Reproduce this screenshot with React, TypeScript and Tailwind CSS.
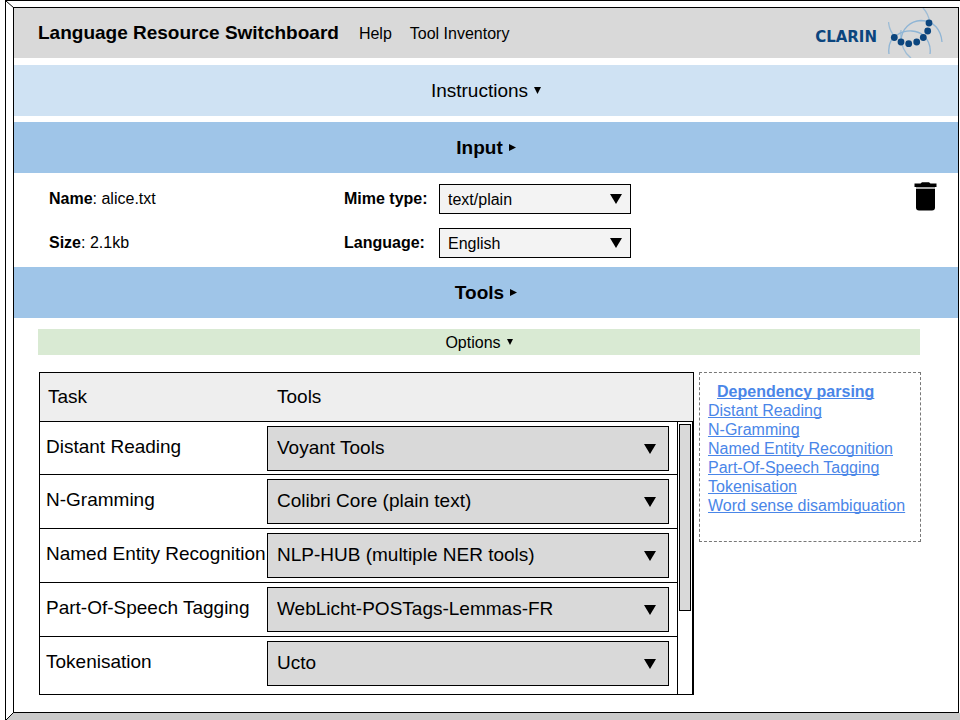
import React from "react";

type ToolRow = { task: string; tool: string; height: string };

const rows: ToolRow[] = [
  { task: "Distant Reading", tool: "Voyant Tools", height: "h-[53px]" },
  { task: "N-Gramming", tool: "Colibri Core (plain text)", height: "h-[54px]" },
  { task: "Named Entity Recognition", tool: "NLP-HUB (multiple NER tools)", height: "h-[54px]" },
  { task: "Part-Of-Speech Tagging", tool: "WebLicht-POSTags-Lemmas-FR", height: "h-[54px]" },
  { task: "Tokenisation", tool: "Ucto", height: "h-[57px]" },
];

const taskLinks = [
  "Distant Reading",
  "N-Gramming",
  "Named Entity Recognition",
  "Part-Of-Speech Tagging",
  "Tokenisation",
  "Word sense disambiguation",
];

function Triangle({ down, className }: { down?: boolean; className: string }) {
  return (
    <svg viewBox="0 0 12 10" preserveAspectRatio="none" aria-hidden="true" className={className}>
      <path d={down ? "M0 0H12L6 10Z" : "M0 0L12 5L0 10Z"} fill="#000" />
    </svg>
  );
}

function Dropdown({
  id,
  value,
  className,
  arrowClass,
}: {
  id: string;
  value: string;
  className: string;
  arrowClass: string;
}) {
  return (
    <div className="relative">
      <select
        id={id}
        defaultValue={value}
        className={`block w-full appearance-none rounded-none border border-black pr-8 text-black ${className}`}
      >
        <option>{value}</option>
      </select>
      <Triangle down className={`pointer-events-none absolute top-1/2 h-[10px] w-3 -translate-y-1/2 ${arrowClass}`} />
    </div>
  );
}

function ClarinLogo() {
  return (
    <a href="#clarin" className="flex h-full items-center gap-[11px] text-[#0b457e]">
      <span className="pt-[7px] font-['DejaVu_Sans',sans-serif] text-[15px] leading-[18px] font-bold">CLARIN</span>
      <svg width="56" height="50" viewBox="0 0 56 50" aria-hidden="true">
        <g fill="none" stroke="#8fb5d5" strokeWidth="1.300">
          <path d="M0.500 14C1 20 4 26 8 29.500" opacity=".8" />
          <path d="M1 46C0 38 2 31 9 27C18 21 30 22 36 28C41 33 43 39 42 46" />
          <path d="M13 32C14 21 22 13 33 12.500C46 12.500 53 22 54 34" />
          <path d="M13 22C12 34 15 44 23 50" opacity=".8" />
          <path d="M35 0C39 4 41 9 42 15" opacity=".8" />
        </g>
        <g fill="#0b457e">
          <circle cx="6.300" cy="29.500" r="3.400" />
          <circle cx="13" cy="34" r="3.400" />
          <circle cx="20.700" cy="35.700" r="3.400" />
          <circle cx="28.700" cy="34" r="3.400" />
          <circle cx="35.300" cy="29.500" r="3.400" />
          <circle cx="39.700" cy="23" r="3.400" />
          <circle cx="41" cy="15" r="3.400" />
        </g>
      </svg>
    </a>
  );
}

export default function App() {
  return (
    <div className="flex min-h-screen flex-col bg-white pl-[5px] font-['Liberation_Sans',Arial,sans-serif] text-[16px] leading-[19px] text-black">
      <div className="relative flex grow flex-col border-t border-l border-black">
        <svg className="absolute top-0 left-0 h-[7px] w-2" viewBox="0 0 8 7" aria-hidden="true">
          <path d="M0 0L8 7" stroke="#000" />
        </svg>

        <div className="mt-[6px] mr-px ml-[7px] grow border border-black">
          <header className="flex h-[50px] items-center bg-[#d9d9d9] pr-[14px] pl-6">
            <h1 className="text-[19px] leading-[22px] font-bold">Language Resource Switchboard</h1>
            <nav className="ml-5 flex grow gap-[18px]">
              <a href="#help">Help</a>
              <a href="#inventory">Tool Inventory</a>
            </nav>
            <ClarinLogo />
          </header>

          <button className="mt-[7px] flex h-[51px] w-full items-center justify-center gap-[6px] bg-[#cfe2f3] text-[19px] leading-[22px]">
            Instructions
            <Triangle down className="h-[7px] w-[7px]" />
          </button>

          <section>
            <h2>
              <button className="mt-[6px] flex h-[51px] w-full items-center justify-center gap-[6px] bg-[#9fc5e8] text-[19px] leading-[22px] font-bold">
                Input
                <Triangle className="h-[7px] w-[7px]" />
              </button>
            </h2>
            <div className="flex items-start justify-between pr-[21px] pb-[9px] pl-[35px]">
              <div className="mt-[11px] grid grid-cols-[295px_95px_192px] items-center gap-y-[14px]">
                <p className="pb-[2px]">
                  <b>Name</b>: alice.txt
                </p>
                <label htmlFor="mime" className="pb-[2px] font-bold">
                  Mime type:
                </label>
                <Dropdown id="mime" value="text/plain" className="h-[30px] bg-[#f3f3f3] pl-2" arrowClass="right-[9px]" />
                <p className="pb-[2px]">
                  <b>Size</b>: 2.1kb
                </p>
                <label htmlFor="language" className="pb-[2px] font-bold">
                  Language:
                </label>
                <Dropdown id="language" value="English" className="h-[30px] bg-[#f3f3f3] pl-2" arrowClass="right-[9px]" />
              </div>
              <button aria-label="Remove file" className="mt-[9px]">
                <svg width="23" height="29" viewBox="0 0 23 29" aria-hidden="true">
                  <path d="M0.500 1.500H6.500L8 0.300H15L16.500 1.500H22.500V5H0.500Z" />
                  <path d="M2 5H21V7H2Z" fill="#a8a8a8" />
                  <path d="M2 7H21V25.500Q21 28.500 18 28.500H5Q2 28.500 2 25.500Z" />
                </svg>
              </button>
            </div>
          </section>

          <section>
            <h2>
              <button className="flex h-[51px] w-full items-center justify-center gap-[6px] bg-[#9fc5e8] text-[19px] leading-[22px] font-bold">
                Tools
                <Triangle className="h-[7px] w-[7px]" />
              </button>
            </h2>
            <div className="mt-[11px] pr-[38px] pl-6">
              <button className="flex h-[26px] w-full items-center justify-center gap-[6px] bg-[#d9ead3]">
                Options
                <Triangle down className="h-[6px] w-[6px]" />
              </button>
            </div>

            <div className="mt-[17px] mb-[17px] flex items-start gap-[5px] pr-[37px] pl-[25px]">
              <table
                id="tools"
                className="grow table-fixed border-separate border-spacing-0 border border-black text-[19px] leading-[22px]"
              >
                <thead>
                  <tr className="h-[49px] bg-[#eeeeee] text-left">
                    <th className="w-[227px] border-b border-black pl-2 font-normal">Task</th>
                    <th className="border-b border-black pl-[10px] font-normal">Tools</th>
                    <th className="w-4 border-b border-black" aria-hidden="true" />
                  </tr>
                </thead>
                <tbody>
                  {rows.map((row, i) => {
                    const line = i < rows.length - 1 ? "border-b border-black" : "";
                    return (
                      <tr key={row.task} className={row.height}>
                        <td className={`pt-[14px] pl-[6px] align-top whitespace-nowrap ${line}`}>
                          <label htmlFor={`tool-${i}`} className="block">
                            {row.task}
                          </label>
                        </td>
                        <td className={`pt-1 pr-2 align-top ${line}`}>
                          <Dropdown
                            id={`tool-${i}`}
                            value={row.tool}
                            className="h-[45px] bg-[#d9d9d9] pb-[2px] pl-[9px]"
                            arrowClass="right-[13px]"
                          />
                        </td>
                        {i === 0 && (
                          <td rowSpan={rows.length} className="border-r border-l border-black px-px pt-[2px] align-top">
                            <div
                              role="scrollbar"
                              aria-label="Scroll tools"
                              aria-controls="tools"
                              aria-valuenow={0}
                              className="h-[187px] border border-black bg-[#d9d9d9]"
                            />
                          </td>
                        )}
                      </tr>
                    );
                  })}
                </tbody>
              </table>

              <aside className="h-[170px] w-[222px] shrink-0 border border-dashed border-[#777777] px-2 pt-[9px] text-[#4a86e8] [text-decoration-skip-ink:none]">
                <a href="#dependency" className="ml-[9px] block font-bold underline">
                  Dependency parsing
                </a>
                <ul>
                  {taskLinks.map((name) => (
                    <li key={name}>
                      <a href="#task" className="whitespace-nowrap underline">
                        {name}
                      </a>
                    </li>
                  ))}
                </ul>
              </aside>
            </div>
          </section>
        </div>

        <div className="h-[7px] bg-[#cacaca]">
          <svg className="block h-[7px] w-[7px]" viewBox="0 0 7 7" aria-hidden="true">
            <path d="M0 0H7L0 7Z" fill="#fff" />
            <path d="M7 0L0 7" stroke="#000" />
          </svg>
        </div>
      </div>
    </div>
  );
}
